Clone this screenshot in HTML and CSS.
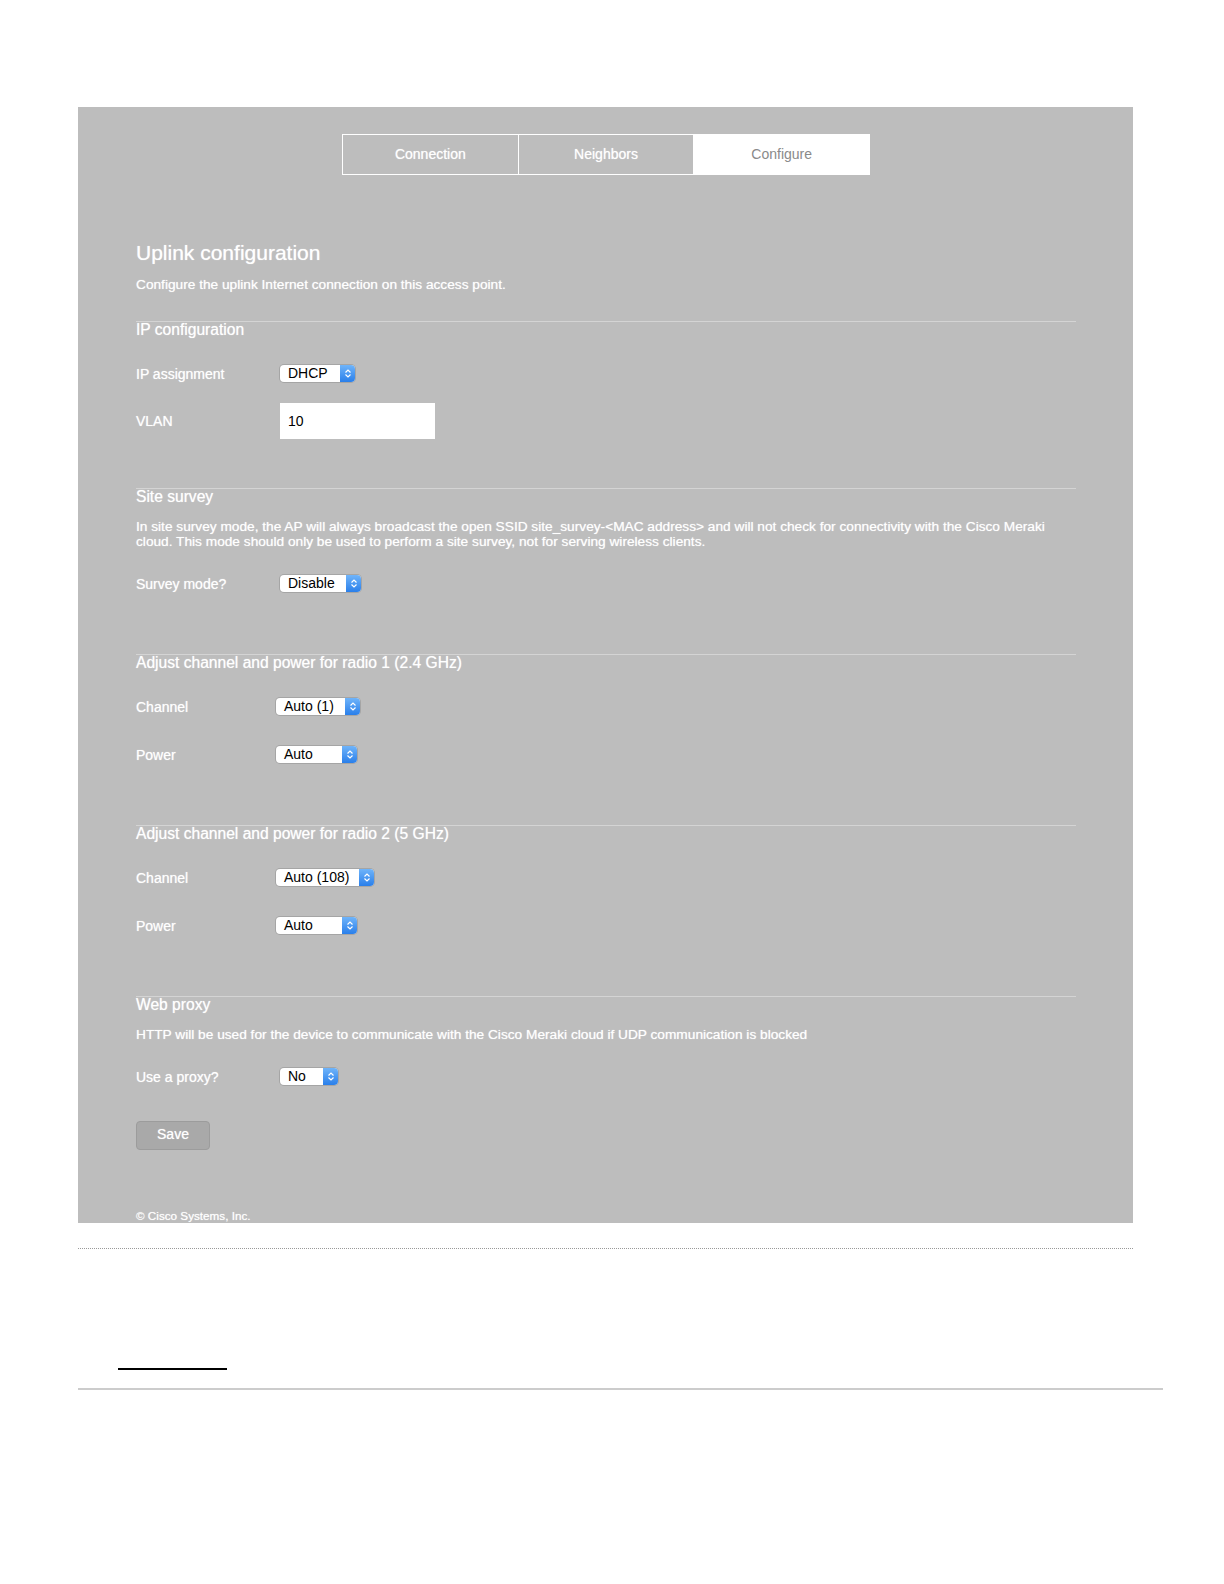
FILE: index.html
```html
<!DOCTYPE html>
<html lang="en">

<head>
    <meta charset="UTF-8">
    <meta name="viewport" content="width=device-width, initial-scale=1.0">
    <title>Uplink configuration</title>
    <link rel="stylesheet" href="styles.css">
</head>

<body>
    <div class="page">
        <div class="panel">
            <!-- 顶部标签 -->
            <div class="tabs">
                <a href="javascript:;" class="tab">Connection</a>
                <a href="javascript:;" class="tab">Neighbors</a>
                <a href="javascript:;" class="tab tab-active">Configure</a>
            </div>

            <h1 class="page-title">Uplink configuration</h1>
            <p class="page-sub">Configure the uplink Internet connection on this access point.</p>

            <div class="section section-first">
                <h2 class="section-title">IP configuration</h2>
                <div class="row">
                    <label class="row-label">IP assignment</label>
                    <span class="select select-dhcp"><span class="select-text">DHCP</span><span class="select-arrow"><svg width="8" height="11" viewBox="0 0 8 11"><path d="M1.5 4.5 4 2 6.5 4.5M1.5 6.5 4 9 6.5 6.5" fill="none" stroke="#fff" stroke-width="1.2"/></svg></span></span>
                </div>
                <div class="row row-input">
                    <label class="row-label">VLAN</label>
                    <span class="text-input">10</span>
                </div>
            </div>

            <div class="section section-second">
                <h2 class="section-title">Site survey</h2>
                <p class="section-text">In site survey mode, the AP will always broadcast the open SSID site_survey-&lt;MAC address&gt; and will not check for connectivity with the Cisco Meraki cloud. This mode should only be used to perform a site survey, not for serving wireless clients.</p>
                <div class="row row-after-text">
                    <label class="row-label">Survey mode?</label>
                    <span class="select select-disable"><span class="select-text">Disable</span><span class="select-arrow"><svg width="8" height="11" viewBox="0 0 8 11"><path d="M1.5 4.5 4 2 6.5 4.5M1.5 6.5 4 9 6.5 6.5" fill="none" stroke="#fff" stroke-width="1.2"/></svg></span></span>
                </div>
            </div>

            <div class="section">
                <h2 class="section-title">Adjust channel and power for radio 1 (2.4 GHz)</h2>
                <div class="row">
                    <label class="row-label row-label-narrow">Channel</label>
                    <span class="select select-auto1"><span class="select-text">Auto (1)</span><span class="select-arrow"><svg width="8" height="11" viewBox="0 0 8 11"><path d="M1.5 4.5 4 2 6.5 4.5M1.5 6.5 4 9 6.5 6.5" fill="none" stroke="#fff" stroke-width="1.2"/></svg></span></span>
                </div>
                <div class="row">
                    <label class="row-label row-label-narrow">Power</label>
                    <span class="select select-auto"><span class="select-text">Auto</span><span class="select-arrow"><svg width="8" height="11" viewBox="0 0 8 11"><path d="M1.5 4.5 4 2 6.5 4.5M1.5 6.5 4 9 6.5 6.5" fill="none" stroke="#fff" stroke-width="1.2"/></svg></span></span>
                </div>
            </div>

            <div class="section">
                <h2 class="section-title">Adjust channel and power for radio 2 (5 GHz)</h2>
                <div class="row">
                    <label class="row-label row-label-narrow">Channel</label>
                    <span class="select select-auto108"><span class="select-text">Auto (108)</span><span class="select-arrow"><svg width="8" height="11" viewBox="0 0 8 11"><path d="M1.5 4.5 4 2 6.5 4.5M1.5 6.5 4 9 6.5 6.5" fill="none" stroke="#fff" stroke-width="1.2"/></svg></span></span>
                </div>
                <div class="row">
                    <label class="row-label row-label-narrow">Power</label>
                    <span class="select select-auto"><span class="select-text">Auto</span><span class="select-arrow"><svg width="8" height="11" viewBox="0 0 8 11"><path d="M1.5 4.5 4 2 6.5 4.5M1.5 6.5 4 9 6.5 6.5" fill="none" stroke="#fff" stroke-width="1.2"/></svg></span></span>
                </div>
            </div>

            <div class="section">
                <h2 class="section-title">Web proxy</h2>
                <p class="section-text">HTTP will be used for the device to communicate with the Cisco Meraki cloud if UDP communication is blocked</p>
                <div class="row row-after-text">
                    <label class="row-label">Use a proxy?</label>
                    <span class="select select-no"><span class="select-text">No</span><span class="select-arrow"><svg width="8" height="11" viewBox="0 0 8 11"><path d="M1.5 4.5 4 2 6.5 4.5M1.5 6.5 4 9 6.5 6.5" fill="none" stroke="#fff" stroke-width="1.2"/></svg></span></span>
                </div>
            </div>

            <a href="javascript:;" class="save-button">Save</a>

            <p class="copyright">© Cisco Systems, Inc.</p>
        </div>

        <div class="dotted-rule"></div>
        <div class="short-rule"></div>
        <div class="bottom-rule"></div>
    </div>
</body>

</html>
```

FILE: styles.css
```css
/* 初始化样式 */

body,
h1,
h2,
p {
    margin: 0px;
    padding: 0px;
}

body {
    background: #fff;
    font-family: "Liberation Sans", Arial, Helvetica, sans-serif;
}

a {
    text-decoration: none;
}

.page {
    padding: 107px 0px 0px 78px;
}
/* 灰色面板 */

.panel {
    width: 1055px;
    box-sizing: border-box;
    padding: 27px 57px 1px 58px;
    background: #bdbdbd;
    color: #fff;
    text-shadow: 0px 0px 1px rgba(255, 255, 255, 0.7);
}
/* 标签栏 */

.tabs {
    display: flex;
    width: 528px;
    margin: 0px auto;
    border: 1px solid #fff;
    box-sizing: border-box;
}

.tab {
    flex: 1;
    height: 39px;
    line-height: 39px;
    text-align: center;
    font-size: 14px;
    color: #fff;
}

.tab + .tab {
    border-left: 1px solid #fff;
}

.tab-active {
    background: #fff;
    color: #8a8a8a;
    text-shadow: none;
}

.page-title {
    margin-top: 65px;
    font-size: 21px;
    line-height: 26px;
    font-weight: normal;
}

.page-sub {
    margin-top: 11px;
    font-size: 13.7px;
    line-height: 16px;
}
/* 分节 */

.section {
    margin-top: 62px;
    border-top: 1px solid #d4d4d4;
}

.section-first {
    margin-top: 28px;
}

.section-second {
    margin-top: 49px;
}

.section-title {
    font-size: 15.6px;
    line-height: 16px;
    font-weight: normal;
}

.section-text {
    margin-top: 14px;
    font-size: 13.7px;
    line-height: 15px;
    padding-right: 20px;
}

.row {
    display: flex;
    align-items: center;
    height: 17px;
    margin-top: 27px;
}

.row + .row {
    margin-top: 31px;
}

.row.row-input {
    height: 36px;
    margin-top: 21px;
}

.row.row-after-text {
    margin-top: 26px;
}

.row-label {
    width: 144px;
    font-size: 14px;
}

.row-label-narrow {
    width: 140px;
}
/* 下拉框 */

.select {
    display: inline-flex;
    height: 17px;
    background: #fff;
    border-radius: 4px;
    box-shadow: 0px 0px 0px 1px rgba(120, 120, 120, 0.35);
    overflow: hidden;
    text-shadow: none;
}

.select-text {
    flex: 1;
    padding-left: 8px;
    font-size: 14px;
    line-height: 17px;
    color: #000;
}

.select-arrow {
    display: flex;
    align-items: center;
    justify-content: center;
    width: 15px;
    background: linear-gradient(#6fb4fa, #2a7fea);
}

.select-dhcp {
    width: 75px;
}

.select-disable {
    width: 81px;
}

.select-auto1 {
    width: 84px;
}

.select-auto {
    width: 81px;
}

.select-auto108 {
    width: 98px;
}

.select-no {
    width: 58px;
}

.text-input {
    width: 155px;
    height: 36px;
    box-sizing: border-box;
    padding-left: 8px;
    background: #fff;
    color: #000;
    font-size: 14px;
    line-height: 36px;
    text-shadow: none;
}

.save-button {
    display: block;
    width: 74px;
    height: 29px;
    margin-top: 36px;
    box-sizing: border-box;
    border: 1px solid #9c9c9c;
    border-radius: 4px;
    background: #a9a9a9;
    color: #fff;
    font-size: 14px;
    line-height: 25px;
    text-align: center;
}

.copyright {
    margin-top: 59px;
    font-size: 11.7px;
    line-height: 13px;
}
/* 面板下方的线 */

.dotted-rule {
    width: 1055px;
    margin-top: 25px;
    border-top: 1px dotted #999;
}

.short-rule {
    width: 109px;
    height: 2px;
    margin: 119px 0px 0px 40px;
    background: #000;
}

.bottom-rule {
    width: 1085px;
    height: 2px;
    margin-top: 18px;
    background: #ccc;
}
```
